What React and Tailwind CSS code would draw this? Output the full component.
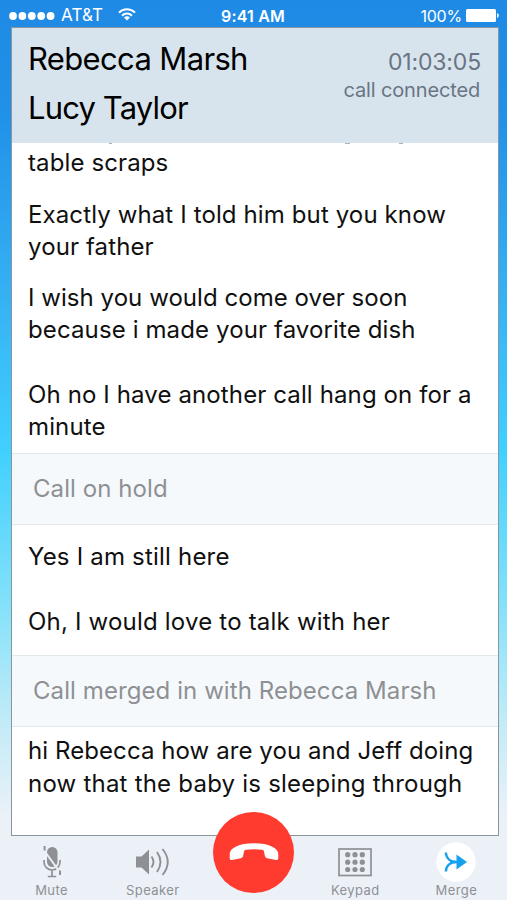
import React from 'react';

const Line = ({ className = '', children }) => (
  <p className={`whitespace-nowrap ${className}`}>{children}</p>
);

function StatusBar() {
  return (
    <div className="relative flex h-[27px] items-center justify-between pt-1 pl-[9px] pr-[8px] text-[17px] text-white">
      <div className="flex items-center">
        <svg width="46" height="8" viewBox="0 0 46 8" fill="currentColor">
          {[4, 13.4, 22.8, 32.2, 41.6].map((cx) => (
            <circle key={cx} cx={cx} cy="4" r="3.9" />
          ))}
        </svg>
        <span className="ml-[6px] tracking-[0.1px]">AT&amp;T</span>
        <svg className="ml-[15px] -mt-[2px]" width="18" height="13" viewBox="0 0 18 13" fill="none" stroke="currentColor" strokeWidth="2">
          <path d="M1 4.6a11.3 11.3 0 0 1 16 0" />
          <path d="M4 7.7a7 7 0 0 1 10 0" />
          <path d="M9 12.6 6 9.6a4.2 4.2 0 0 1 6 0z" fill="currentColor" stroke="none" />
        </svg>
      </div>
      <span className="absolute left-[221px] text-[16px] font-semibold tracking-[0.2px]">9:41 AM</span>
      <div className="flex items-center">
        <span className="mr-[4px] text-[16px] tracking-[-0.2px]">100%</span>
        <svg className="-mt-px" width="33" height="13" viewBox="0 0 33 13" fill="currentColor">
          <rect width="30" height="13" rx="1.5" />
          <path d="M31 4.3c2.4.4 2.4 4 0 4.4z" />
        </svg>
      </div>
    </div>
  );
}

function CallHeader() {
  return (
    <header className="flex h-[115px] shrink-0 justify-between bg-[#d8e4ed] pl-4 pr-[18px]">
      <div className="pt-[6px] text-[31px] leading-[49px] text-black">
        <p className="tracking-[-0.65px]">Rebecca Marsh</p>
        <p className="tracking-[-0.85px]">Lucy Taylor</p>
      </div>
      <div className="pt-5 text-right text-[#687584]">
        <p className="-mr-px text-[23px] leading-[28px] tracking-[-0.15px]">01:03:05</p>
        <p className="text-[20px] leading-[28px] tracking-[-0.15px]">call connected</p>
      </div>
    </header>
  );
}

function Notice({ children }) {
  return (
    <div className="flex h-[72px] items-center border-y border-[#e2e9ec] bg-[#f5f9fc] pl-[21px] text-[24px] tracking-[0.08px] text-[#8e9093]">
      {children}
    </div>
  );
}

function Transcript() {
  return (
    <div className="flex-1 overflow-hidden bg-white text-[24px] leading-[32px] tracking-[0.12px] text-[#101010]">
      <div className="h-[310px] pl-4">
        {/* tails of the line scrolled under the header */}
        <svg width="400" height="1" viewBox="0 0 400 1" fill="#a9b2ba">
          <path d="M81 0h3v1h-3zM317 0h5v1h-5zM371 0h4v1h-4z" />
        </svg>
        <Line className="mt-[3px]">table scraps</Line>
        <Line className="mt-5">Exactly what I told him but you know</Line>
        <Line>your father</Line>
        <Line className="mt-[19px] tracking-[0.05px]">I wish you would come over soon</Line>
        <Line>because i made your favorite dish</Line>
        <Line className="mt-[33px]">Oh no I have another call hang on for a</Line>
        <Line>minute</Line>
      </div>
      <Notice>Call on hold</Notice>
      <div className="h-[130px] pl-4 pt-4">
        <Line className="tracking-[0.2px]">Yes I am still here</Line>
        <Line className="mt-[33px] tracking-[0.2px]">Oh, I would love to talk with her</Line>
      </div>
      <Notice>Call merged in with Rebecca Marsh</Notice>
      <div className="pl-4 pt-2">
        <Line className="tracking-[0.08px]">hi Rebecca how are you and Jeff doing</Line>
        <Line className="mt-px tracking-[0.22px]">now that the baby is sleeping through</Line>
      </div>
    </div>
  );
}

function MuteIcon() {
  return (
    <svg width="20" height="34" viewBox="0 0 20 34" fill="none" stroke="currentColor">
      <rect x="5" y="2" width="10.500" height="20" rx="5.200" fill="currentColor" stroke="none" />
      <path d="M2 15v2c0 4.500 3.500 8 8 8s8-3.500 8-8v-2M10 25v6M5.800 31.500h8.400" strokeWidth="1.700" />
      <path d="M2.500 6 17 26" stroke="#ecf1f8" strokeWidth="2" />
      <path d="M2.600 1v4.500M18 25.500v4.500" strokeWidth="2" />
    </svg>
  );
}

function SpeakerIcon() {
  return (
    <svg width="36" height="34" viewBox="0 0 36 34" fill="none" stroke="currentColor" strokeWidth="1.900">
      <path d="M1 11.500h5.500L14 4.500v25L6.500 22.500H1z" fill="currentColor" stroke="none" />
      <path d="M16.500 11.500q4 5.500 0 11M22 7q7 10 0 20M27.500 4q10.500 13 0 26" />
    </svg>
  );
}

function KeypadIcon() {
  return (
    <svg width="34" height="34" viewBox="0 0 34 34" fill="currentColor">
      <rect x="1" y="4" width="32" height="26.500" fill="none" stroke="currentColor" strokeWidth="1.700" />
      {[9.7, 17, 24.3].map((x) => [9.7, 17.2, 24.5].map((y) => <circle key={`${x}-${y}`} cx={x} cy={y} r="2.600" />))}
    </svg>
  );
}

function MergeIcon() {
  return (
    <svg className="-my-[3px]" width="40" height="40" viewBox="0 0 40 40">
      <circle cx="20" cy="20" r="19.700" fill="#fff" />
      <path d="M9.800 10.500c.4 5.500 4.200 9.500 11 9.500-6.800 0-10.600 4-11 9.500M14 20h8" fill="none" stroke="#16a1ee" strokeWidth="2.400" />
      <path d="M20.500 12.500 31 20l-10.500 7.500z" fill="#16a1ee" />
    </svg>
  );
}

function Action({ label, icon }) {
  return (
    <button className="flex flex-col items-center text-[#8e9096]">
      {icon}
      <span className="mt-[3px] text-[13px] leading-[16px] tracking-[0.4px]">{label}</span>
    </button>
  );
}

export default function App() {
  return (
    <div className="flex h-[900px] w-[507px] flex-col overflow-hidden bg-[linear-gradient(180deg,#1f8ae5_0%,#2090e8_12%,#35b0f3_32%,#40d0fe_50%,#83e1fa_67%,#c1ebf7_80%,#ecf1f8_91%)] font-['Inter',sans-serif]">
      <StatusBar />
      <main className="ml-[11px] mr-[8px] flex h-[809px] shrink-0 flex-col border border-[#8b959d]">
        <CallHeader />
        <Transcript />
      </main>
      <nav className="grid h-16 shrink-0 grid-cols-5 pt-[9px] pl-px">
        <Action label="Mute" icon={<MuteIcon />} />
        <Action label="Speaker" icon={<SpeakerIcon />} />
        <button className="relative -mt-[33.500px] flex size-[81px] items-center justify-center justify-self-center rounded-full bg-[#ff3b30]">
          <svg width="50" height="20" viewBox="0 0 50 20" fill="#fff">
            <path d="M.7 12C.7 6 10 1.200 25 1.200S49.300 6 49.300 12v4c0 1.500-.8 2.300-2.200 2L38 16.200c-1.300-.3-1.900-1.200-2.200-2.600l-.8-4c-.3-1.300-1-1.700-2.200-1.900-4.800-.7-10.800-.7-15.600 0-1.200.2-1.900.6-2.200 1.900l-.8 4c-.3 1.400-.9 2.300-2.200 2.600L2.900 18C1.500 18.300.7 17.500.7 16z" />
          </svg>
        </button>
        <Action label="Keypad" icon={<KeypadIcon />} />
        <Action label="Merge" icon={<MergeIcon />} />
      </nav>
    </div>
  );
}
